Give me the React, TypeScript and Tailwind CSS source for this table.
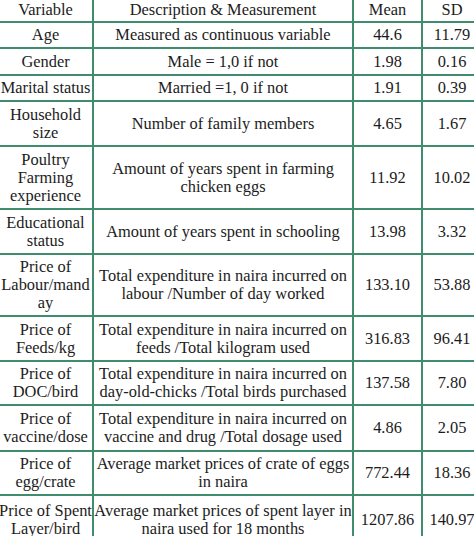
const rows: { v: string[]; d: string[]; mean: string; sd: string; h: string }[] = [
  { v: ['Age'], d: ['Measured as continuous variable'], mean: '44.6', sd: '11.79', h: 'h-[26px]' },
  { v: ['Gender'], d: ['Male = 1,0 if not'], mean: '1.98', sd: '0.16', h: 'h-[27px]' },
  { v: ['Marital status'], d: ['Married =1, 0 if not'], mean: '1.91', sd: '0.39', h: 'h-[26px]' },
  { v: ['Household', 'size'], d: ['Number of family members'], mean: '4.65', sd: '1.67', h: 'h-[45px]' },
  {
    v: ['Poultry', 'Farming', 'experience'],
    d: ['Amount of years spent in farming', 'chicken eggs'],
    mean: '11.92',
    sd: '10.02',
    h: 'h-[63px]',
  },
  { v: ['Educational', 'status'], d: ['Amount of years spent in schooling'], mean: '13.98', sd: '3.32', h: 'h-[45px]' },
  {
    v: ['Price of', 'Labour/mand', 'ay'],
    d: ['Total expenditure in naira incurred on', 'labour /Number of day worked'],
    mean: '133.10',
    sd: '53.88',
    h: 'h-[62px]',
  },
  {
    v: ['Price of', 'Feeds/kg'],
    d: ['Total expenditure in naira incurred on', 'feeds /Total kilogram used'],
    mean: '316.83',
    sd: '96.41',
    h: 'h-[45px]',
  },
  {
    v: ['Price of', 'DOC/bird'],
    d: ['Total expenditure in naira incurred on', 'day-old-chicks /Total birds purchased'],
    mean: '137.58',
    sd: '7.80',
    h: 'h-[44px]',
  },
  {
    v: ['Price of', 'vaccine/dose'],
    d: ['Total expenditure in naira incurred on', 'vaccine and drug /Total dosage used'],
    mean: '4.86',
    sd: '2.05',
    h: 'h-[46px]',
  },
  {
    v: ['Price of', 'egg/crate'],
    d: ['Average market prices of crate of eggs', 'in naira'],
    mean: '772.44',
    sd: '18.36',
    h: 'h-[44px]',
  },
  {
    v: ['Price of Spent', 'Layer/bird'],
    d: ['Average market prices of spent layer in', 'naira used for 18 months'],
    mean: '1207.86',
    sd: '140.97',
    h: 'h-[50px]',
  },
]

const lines = (arr: string[]) =>
  arr.map((t, i) => (
    <span key={i} className="block whitespace-nowrap">
      {t}
    </span>
  ))

const cell = 'border-2 border-[#3f8d6c] text-center align-middle p-0'

export default function App() {
  return (
    <div className="h-[536px] w-[474px] overflow-hidden bg-white">
      <table
        className="-ml-[1px] -mt-[1px] w-[482px] table-fixed border-collapse text-[16.4px] leading-[18px] text-[#1c1c1c]"
        style={{ fontFamily: '"Liberation Serif", serif' }}
      >
        <colgroup>
          <col className="w-[94px]" />
          <col className="w-[260px]" />
          <col className="w-[69px]" />
          <col className="w-[59px]" />
        </colgroup>
        <thead>
          <tr className="h-[23px]">
            <th className={`${cell} border-t-0 border-l-0 font-normal`}>Variable</th>
            <th className={`${cell} border-t-0 font-normal`}>Description &amp; Measurement</th>
            <th className={`${cell} border-t-0 font-normal`}>Mean</th>
            <th className={`${cell} border-t-0 border-r-0 font-normal`}>SD</th>
          </tr>
        </thead>
        <tbody>
          {rows.map((r) => (
            <tr key={r.v.join(' ')} className={r.h}>
              <td className={`${cell} border-l-0`}>{lines(r.v)}</td>
              <td className={cell}>{lines(r.d)}</td>
              <td className={cell}>{r.mean}</td>
              <td className={`${cell} border-r-0`}>{r.sd}</td>
            </tr>
          ))}
        </tbody>
      </table>
    </div>
  )
}
